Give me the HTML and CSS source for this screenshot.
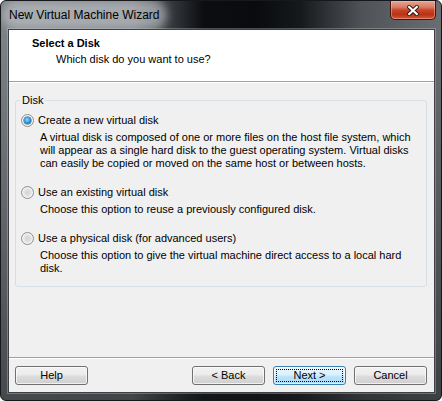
FILE: index.html
```html
<!DOCTYPE html>
<html>
<head>
<meta charset="utf-8">
<link rel="stylesheet" href="styles.css">
</head>
<body>
<div class="window">
  <div class="titlebar">
    <span class="title">New Virtual Machine Wizard</span>
    <div class="close">
      <svg width="12" height="11" viewBox="0 0 12 11">
        <path d="M2.2 2 L9.8 9 M9.8 2 L2.2 9" stroke="#2a1a16" stroke-width="4" stroke-linecap="square"/>
        <path d="M2.2 2 L9.8 9 M9.8 2 L2.2 9" stroke="#ffffff" stroke-width="2.2" stroke-linecap="square"/>
      </svg>
    </div>
  </div>
  <div class="client">
    <div class="header">
      <div class="h-title">Select a Disk</div>
      <div class="h-sub">Which disk do you want to use?</div>
    </div>
    <div class="body">
      <fieldset class="group">
        <legend class="legend">Disk</legend>
        <div class="options">
          <div class="option">
            <div class="radio-row"><span class="radio checked"></span><span>Create a new virtual disk</span></div>
            <p class="desc">A virtual disk is composed of one or more files on the host file system, which will appear as a single hard disk to the guest operating system. Virtual disks can easily be copied or moved on the same host or between hosts.</p>
          </div>
          <div class="option">
            <div class="radio-row"><span class="radio"></span><span>Use an existing virtual disk</span></div>
            <p class="desc">Choose this option to reuse a previously configured disk.</p>
          </div>
          <div class="option">
            <div class="radio-row"><span class="radio"></span><span>Use a physical disk (for advanced users)</span></div>
            <p class="desc">Choose this option to give the virtual machine direct access to a local hard disk.</p>
          </div>
        </div>
      </fieldset>
    </div>
    <div class="footer">
      <button class="btn">Help</button>
      <div class="spacer"></div>
      <button class="btn">&lt; Back</button>
      <button class="btn default"><span class="focus">Next &gt;</span></button>
      <button class="btn">Cancel</button>
    </div>
  </div>
</div>
</body>
</html>
```

FILE: styles.css
```css
html, body {
  margin: 0;
  padding: 0;
  background: #ffffff;
}

.window {
  box-sizing: border-box;
  width: 442px;
  height: 401px;
  border: 1px solid #16181b;
  border-radius: 6px;
  display: flex;
  flex-direction: column;
  overflow: hidden;
  background:
    linear-gradient(to bottom, rgba(0,0,0,0) 0px, rgba(0,0,0,0) 40px, rgba(25,27,30,0.55) 100%),
    linear-gradient(to right, #7c8185 0%, #72777b 30%, #3a3e42 38%, #0b0d10 46%, #090b0e 58%, #16191c 68%, #4f5357 82%, #6a6e72 100%);
  font-family: "Liberation Sans", Arial, sans-serif;
  font-size: 11px;
  color: #000;
}

.titlebar {
  height: 28px;
  display: flex;
  justify-content: space-between;
  align-items: flex-start;
  flex: none;
}

.title {
  margin: 6px 0 0 8px;
  font-family: "Liberation Sans", Arial, sans-serif;
  font-size: 12px;
  line-height: 16px;
  color: #000;
  background: rgba(205, 210, 214, 0.55);
  box-shadow: 0 0 9px 7px rgba(205, 210, 214, 0.55);
  border-radius: 8px;
}

.close {
  width: 46px;
  height: 19px;
  margin-right: 5px;
  box-sizing: border-box;
  border: 1px solid #40160d;
  border-top: none;
  border-radius: 0 0 5px 5px;
  background: linear-gradient(to bottom, #e4a595 0%, #d87a62 35%, #c8452a 50%, #b93214 75%, #cf5a3c 100%);
  box-shadow: inset 0 0 0 1px rgba(255, 200, 180, 0.45);
  display: flex;
  align-items: center;
  justify-content: center;
}

.client {
  flex: 1;
  margin: 0 6px 7px 7px;
  border: 1px solid #3d4044;
  box-shadow: 0 0 0 1px rgba(200, 205, 210, 0.35);
  background: #f0f0f0;
  display: flex;
  flex-direction: column;
}

.header {
  box-sizing: border-box;
  height: 52px;
  background: #ffffff;
  border-bottom: 1px solid #a0a0a0;
  padding: 7px 0 0 23px;
  flex: none;
}

.h-title {
  font-weight: bold;
  line-height: 13px;
}

.h-sub {
  margin-top: 3px;
  padding-left: 24px;
  line-height: 13px;
}

.body {
  flex: 1;
  border-top: 1px solid #ffffff;
  padding: 0 7px 0 6px;
}

.group {
  margin: 11px 0 0 0;
  padding: 0;
  border: 1px solid #d5dfe5;
  border-radius: 3px;
  min-width: 0;
}

.legend {
  margin-left: 4px;
  padding: 0 2px;
  line-height: 13px;
}

.options {
  padding: 7px 8px 11px 5px;
  display: flex;
  flex-direction: column;
  gap: 16px;
}

.radio-row {
  display: flex;
  align-items: center;
  height: 13px;
  line-height: 13px;
}

.radio {
  box-sizing: border-box;
  width: 13px;
  height: 13px;
  margin-right: 4px;
  border-radius: 50%;
  border: 1px solid #8f8f8f;
  background: radial-gradient(circle at 50% 50%, #d2d2d2 0%, #e4e4e4 45%, #f6f6f6 100%);
  box-shadow: inset 0 0 0 1px #f4f4f4;
  display: flex;
  align-items: center;
  justify-content: center;
  flex: none;
}

.radio.checked::after {
  content: "";
  width: 7px;
  height: 7px;
  border-radius: 50%;
  background: radial-gradient(circle at 45% 40%, #9fe0ff 0%, #2f9ae6 45%, #0e4f86 100%);
  box-shadow: 0 0 0 0.5px #2a5f8e;
}

.desc {
  margin: 4px 0 0 19px;
  line-height: 13px;
}

.footer {
  flex: none;
  border-top: 1px solid #a0a0a0;
  box-shadow: inset 0 1px 0 #ffffff;
  padding: 8px 7px 7px 6px;
  display: flex;
  gap: 8px;
}

.spacer {
  flex: 1;
}

.btn {
  box-sizing: border-box;
  width: 73px;
  height: 19px;
  padding: 0;
  margin: 0;
  border: 1px solid #707070;
  border-radius: 3px;
  background: linear-gradient(to bottom, #f2f2f2 0%, #ebebeb 48%, #dddddd 52%, #cfcfcf 100%);
  box-shadow: inset 0 0 0 1px rgba(255,255,255,0.7);
  font-family: "Liberation Sans", Arial, sans-serif;
  font-size: 11px;
  line-height: 15px;
  color: #000;
  display: flex;
  align-items: center;
  justify-content: center;
}

.btn.default {
  border-color: #3c7fb1;
  background: linear-gradient(to bottom, #eaf6fd 0%, #d9f0fc 48%, #bee6fd 52%, #a7d9f5 100%);
  box-shadow: inset 0 0 0 1px rgba(255,255,255,0.6);
  padding: 2px;
}

.focus {
  box-sizing: border-box;
  width: 100%;
  height: 100%;
  border: 1px dotted #000;
  display: flex;
  align-items: center;
  justify-content: center;
}
```
